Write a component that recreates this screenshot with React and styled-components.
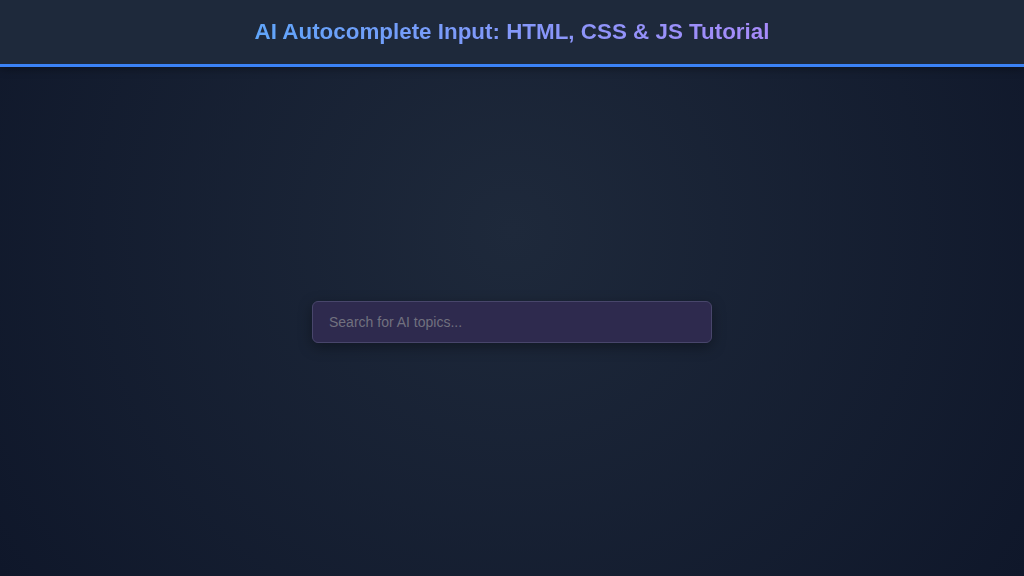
import React from "react";
import styled, { createGlobalStyle } from "styled-components";

const GlobalStyle = createGlobalStyle`
  * {
    box-sizing: border-box;
  }
  html, body {
    margin: 0;
    padding: 0;
    height: 100%;
  }
  body {
    font-family: "Liberation Sans", Arial, sans-serif;
    background: #0f172a;
  }
  #root {
    height: 100%;
  }
`;

const Page = styled.div`
  height: 100vh;
  display: flex;
  flex-direction: column;
  background: radial-gradient(circle at 50% 40%, #1e293b 0%, #0f172a 100%);
`;

const Header = styled.header`
  height: 67px;
  flex-shrink: 0;
  display: flex;
  align-items: center;
  justify-content: center;
  background: #1e293b;
  border-bottom: 3px solid #3b82f6;
  box-shadow: 0 2px 8px rgba(0, 0, 0, 0.35);
`;

const Title = styled.h1`
  margin: 0;
  font-size: 22.4px;
  font-weight: 700;
  background: linear-gradient(90deg, #60a5fa, #a78bfa);
  -webkit-background-clip: text;
  background-clip: text;
  color: transparent;
`;

const Main = styled.main`
  flex: 1;
  display: flex;
  align-items: center;
  justify-content: center;
`;

const SearchInput = styled.input`
  width: 400px;
  height: 42px;
  padding: 0 16px;
  font-family: "Liberation Sans", Arial, sans-serif;
  font-size: 14px;
  color: #e2e8f0;
  background: #2e2a4e;
  border: 1px solid #48466b;
  border-radius: 6px;
  box-shadow: 0 4px 14px rgba(0, 0, 0, 0.35);
  outline: none;

  &::placeholder {
    color: #71717f;
  }
`;

export default function App() {
  return (
    <>
      <GlobalStyle />
      <Page>
        <Header>
          <Title>AI Autocomplete Input: HTML, CSS &amp; JS Tutorial</Title>
        </Header>
        <Main>
          <SearchInput type="text" placeholder="Search for AI topics..." />
        </Main>
      </Page>
    </>
  );
}
